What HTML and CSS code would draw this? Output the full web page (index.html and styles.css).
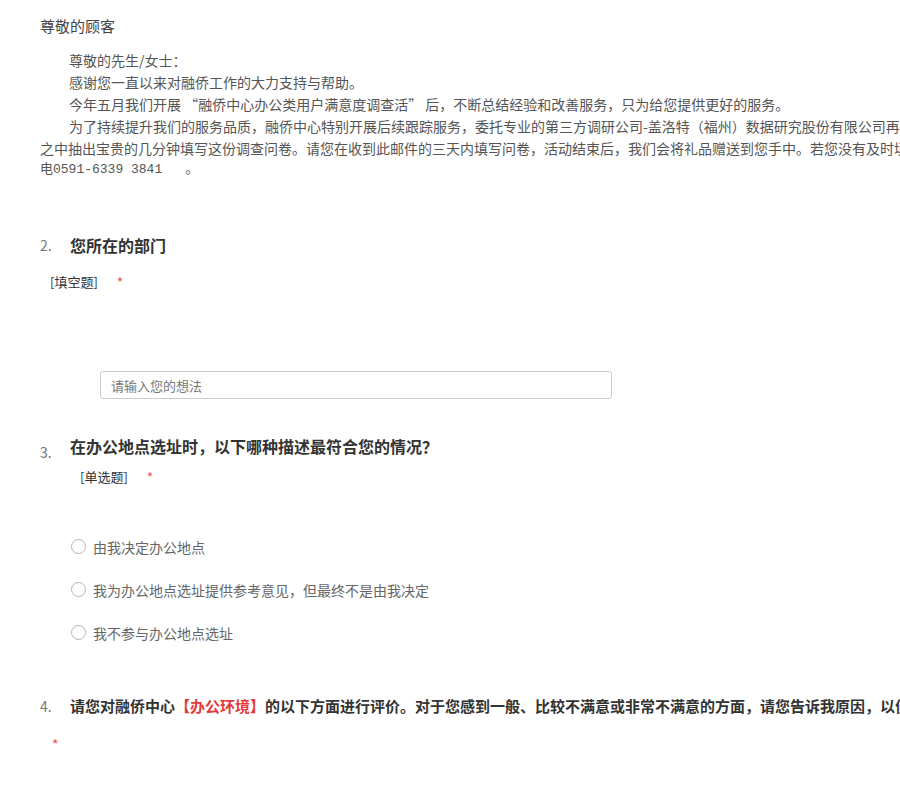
FILE: index.html
```html
<!DOCTYPE html>
<html lang="zh-CN">
<head>
    <meta charset="UTF-8">
    <title>问卷调查</title>
    <link rel="stylesheet" href="styles.css">
</head>
<body>

<!-- 开头信 -->
<div class="greeting">尊敬的顾客</div>
<div class="letter">
    <p class="indent">尊敬的先生/女士：</p>
    <p class="indent">感谢您一直以来对融侨工作的大力支持与帮助。</p>
    <p class="indent">今年五月我们开展 “融侨中心办公类用户满意度调查活” 后，不断总结经验和改善服务，只为给您提供更好的服务。</p>
    <p class="indent">为了持续提升我们的服务品质，融侨中心特别开展后续跟踪服务，委托专业的第三方调研公司-盖洛特（福州）数据研究股份有限公司再次邀请您参与调查，希望您能在百忙</p>
    <p>之中抽出宝贵的几分钟填写这份调查问卷。请您在收到此邮件的三天内填写问卷，活动结束后，我们会将礼品赠送到您手中。若您没有及时填写问卷，请致</p>
    <p class="mono">电0591-6339 3841 &nbsp; 。</p>
</div>

<!-- 第2题 -->
<div class="question q2">
    <div class="q-head">
        <span class="q-num">2.</span>
        <span class="q-title">您所在的部门</span>
    </div>
    <div class="q-type type-fill">[填空题]<span class="required">*</span></div>
    <input class="text-input" type="text" placeholder="请输入您的想法">
</div>

<!-- 第3题 -->
<div class="question q3">
    <div class="q-head">
        <span class="q-num num-low">3.</span>
        <span class="q-title">在办公地点选址时，以下哪种描述最符合您的情况？</span>
    </div>
    <div class="q-type type-choice">[单选题]<span class="required">*</span></div>
    <ul class="options">
        <li><span class="radio"></span>由我决定办公地点</li>
        <li><span class="radio"></span>我为办公地点选址提供参考意见，但最终不是由我决定</li>
        <li><span class="radio"></span>我不参与办公地点选址</li>
    </ul>
</div>

<!-- 第4题 -->
<div class="question q4">
    <div class="q-head">
        <span class="q-num">4.</span>
        <span class="q-title small">请您对融侨中心<span class="hl">【办公环境】</span>的以下方面进行评价。对于您感到一般、比较不满意或非常不满意的方面，请您告诉我原因，以便我们改进。</span>
    </div>
    <div class="star-line"><span class="required">*</span></div>
</div>

</body>
</html>
```

FILE: styles.css
```css
html, body {
    overflow: hidden;
}

body {
    margin: 0;
    background: #fff;
    color: #333;
    font-family: "Noto Sans CJK SC", "Noto Sans", sans-serif;
}

.greeting {
    padding: 16px 40px 0;
    font-size: 15px;
    line-height: 20px;
    color: #444;
}

/* 信件正文，不换行，超出部分被裁掉 */
.letter {
    margin-top: 13px;
    padding-left: 40px;
    font-size: 14px;
    line-height: 22px;
    color: #555;
    white-space: nowrap;
}

.letter p {
    margin: 0;
}

.letter .indent {
    text-indent: 29px;
}

.letter .mono {
    font-family: "Liberation Mono", "Noto Sans CJK SC", monospace;
    font-size: 13px;
}

.question {
    padding-left: 40px;
}

.q2 {
    margin-top: 52px;
}

.q3 {
    margin-top: 35px;
}

.q4 {
    margin-top: 40px;
}

.q-head {
    display: flex;
    align-items: flex-start;
    white-space: nowrap;
}

.q-num {
    width: 30px;
    flex-shrink: 0;
    font-size: 14px;
    line-height: 24px;
    color: #777;
}

.num-low {
    padding-top: 6px;
    margin-bottom: -6px;
}

.q-title {
    font-size: 16px;
    line-height: 24px;
    font-weight: bold;
    color: #333;
}

.q-title.small {
    font-size: 15px;
}

.hl {
    color: #e43a3a;
}

.q-type {
    height: 20px;
    font-size: 13px;
    line-height: 20px;
    color: #333;
}

.type-fill {
    margin-top: 15px;
    padding-left: 10px;
}

.type-choice {
    margin-top: 9px;
    padding-left: 40px;
}

.required {
    margin-left: 19px;
    font-size: 14px;
    line-height: 20px;
    vertical-align: top;
    color: #f25555;
}

.text-input {
    display: block;
    box-sizing: border-box;
    margin: 79px 0 0 60px;
    width: 512px;
    height: 28px;
    padding: 0 10px;
    border: 1px solid #ccc;
    border-radius: 3px;
    font-family: inherit;
    font-size: 13px;
    color: #333;
    outline: none;
}

.text-input::placeholder {
    color: #777;
}

.options {
    list-style: none;
    margin: 38px 0 0;
    padding: 0 0 0 31px;
}

.options li {
    display: flex;
    align-items: center;
    gap: 7px;
    height: 43px;
    font-size: 14px;
    color: #666;
}

.radio {
    width: 13px;
    height: 13px;
    border: 1.5px solid #b5b5b5;
    border-radius: 50%;
    background: #fff;
}

.star-line {
    height: 20px;
    margin-top: 16px;
    padding-left: 12px;
    font-size: 13px;
    line-height: 20px;
}

.star-line .required {
    margin-left: 0;
}
```
